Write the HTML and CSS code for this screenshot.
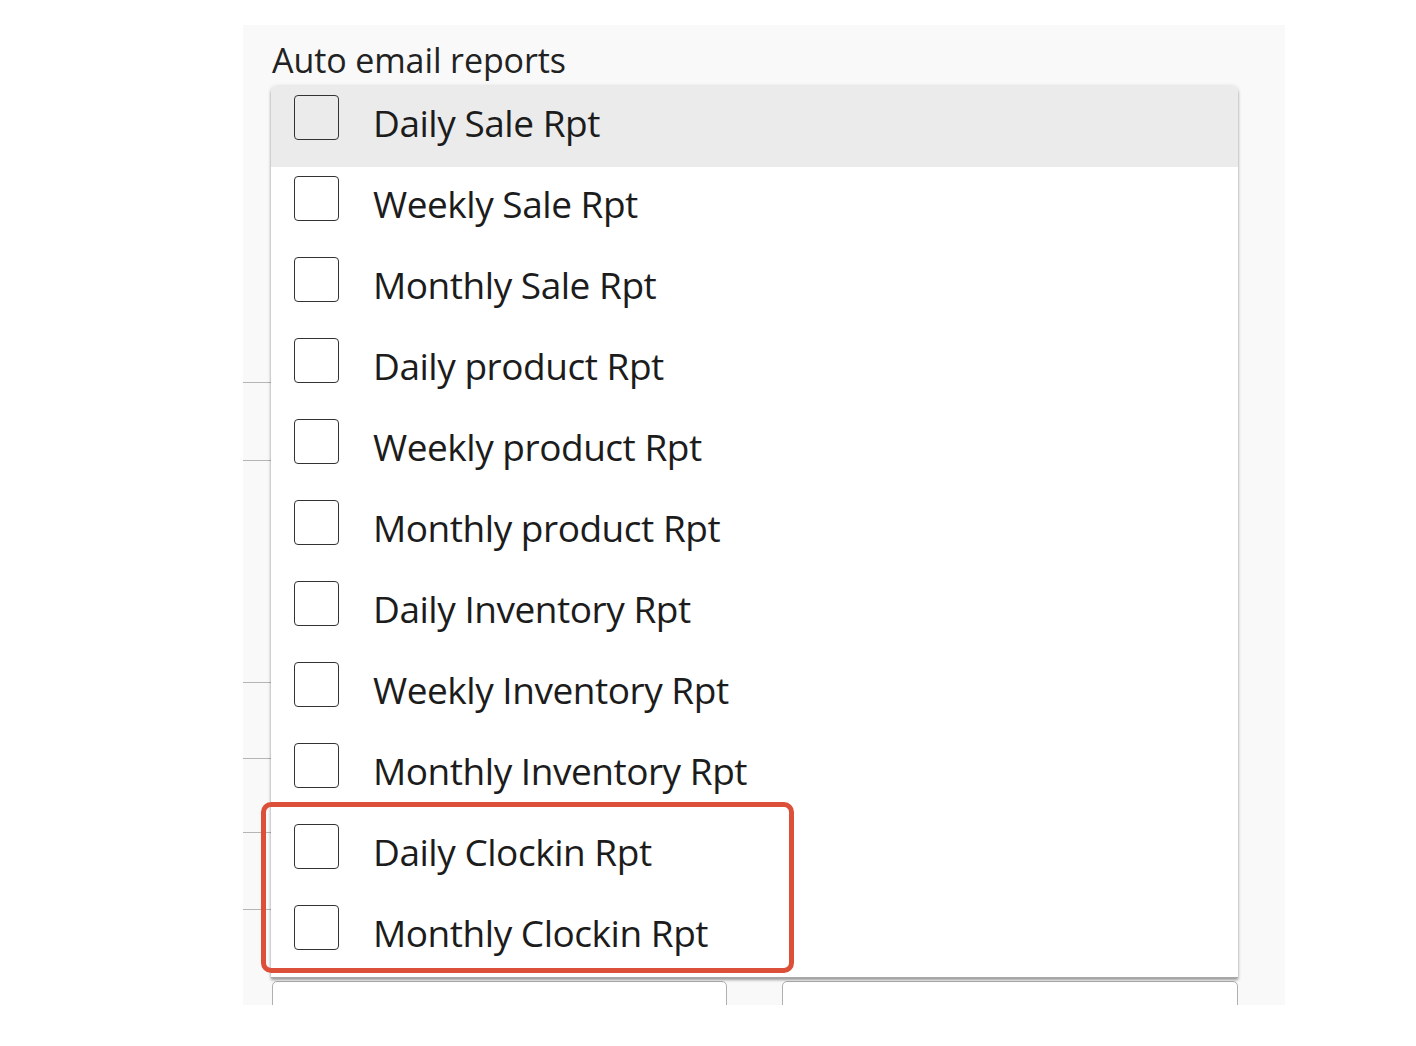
FILE: index.html
```html
<!DOCTYPE html>
<html>
<head>
<meta charset="utf-8">
<link rel="stylesheet" href="styles.css">
</head>
<body>
<div class="panel">
  <div class="label">Auto email reports</div>
  <div class="ghost-fields">
    <div class="ghost-line"></div>
    <div class="ghost-line"></div>
    <div class="ghost-line"></div>
    <div class="ghost-line"></div>
    <div class="ghost-line"></div>
    <div class="ghost-line"></div>
  </div>
  <div class="inputs">
    <div class="input"></div>
    <div class="input"></div>
  </div>

  <div class="dropdown">
    <div class="opt active"><span class="cb"></span><span class="txt">Daily Sale Rpt</span></div>
    <div class="opt"><span class="cb"></span><span class="txt">Weekly Sale Rpt</span></div>
    <div class="opt"><span class="cb"></span><span class="txt">Monthly Sale Rpt</span></div>
    <div class="opt"><span class="cb"></span><span class="txt">Daily product Rpt</span></div>
    <div class="opt"><span class="cb"></span><span class="txt">Weekly product Rpt</span></div>
    <div class="opt"><span class="cb"></span><span class="txt">Monthly product Rpt</span></div>
    <div class="opt"><span class="cb"></span><span class="txt">Daily Inventory Rpt</span></div>
    <div class="opt"><span class="cb"></span><span class="txt">Weekly Inventory Rpt</span></div>
    <div class="opt"><span class="cb"></span><span class="txt">Monthly Inventory Rpt</span></div>
    <div class="opt"><span class="cb"></span><span class="txt">Daily Clockin Rpt</span></div>
    <div class="opt"><span class="cb"></span><span class="txt">Monthly Clockin Rpt</span></div>
  </div>
  <div class="highlight"></div>
</div>
</body>
</html>
```

FILE: styles.css
```css
* { box-sizing: border-box; }
html, body { margin: 0; padding: 0; background: #ffffff; }
body { font-family: "Open Sans", "Liberation Sans", sans-serif; color: #222; }

.panel {
  position: relative;
  margin: 25px 0 0 243px;
  width: 1042px;
  height: 980px;
  background: #f9f9f9;
  overflow: hidden;
  padding-top: 13px;
}

.label {
  font-size: 34px;
  line-height: 45px;
  margin-left: 29px;
  color: #222;
  letter-spacing: -0.1px;
}

.ghost-fields {
  display: flex;
  flex-direction: column;
  width: 995px;
}
.ghost-line { border-bottom: 1.5px solid #b5b5b5; }
.ghost-line:nth-child(1) { height: 300px; }
.ghost-line:nth-child(2) { height: 78px; }
.ghost-line:nth-child(3) { height: 222px; }
.ghost-line:nth-child(4) { height: 76px; }
.ghost-line:nth-child(5) { height: 74px; }
.ghost-line:nth-child(6) { height: 77px; }

.inputs {
  display: flex;
  gap: 55px;
  margin: 71px 0 0 29px;
}
.input {
  width: 455px;
  height: 60px;
  background: #fff;
  border: 1.5px solid #b0b0b0;
  border-radius: 5px;
}
.input + .input { width: 456px; }

.dropdown {
  position: absolute;
  left: 28px;
  top: 61px;
  width: 967px;
  background: #fff;
  border-radius: 6px 6px 0 0;
  box-shadow: 0 2px 3px rgba(0,0,0,0.35), 0 0 4px rgba(0,0,0,0.12);
  border-bottom: 1px solid #a8a8a8;
}
.opt {
  height: 81px;
  display: flex;
  align-items: flex-start;
  padding: 9px 0 0 23px;
}
.opt.active { background: #ebebeb; border-radius: 6px 6px 0 0; }
.cb {
  width: 45px;
  height: 45px;
  flex: none;
  border: 1.5px solid #333;
  border-radius: 4px;
  background: transparent;
}
.txt {
  margin-left: 34px;
  font-size: 37px;
  line-height: 52px;
  margin-top: 2px;
  color: #1c1c1c;
  letter-spacing: -0.47px;
}

.highlight {
  position: absolute;
  left: 18px;
  top: 777px;
  width: 533px;
  height: 171px;
  border: 5px solid #dc5039;
  border-radius: 10px;
}
```
